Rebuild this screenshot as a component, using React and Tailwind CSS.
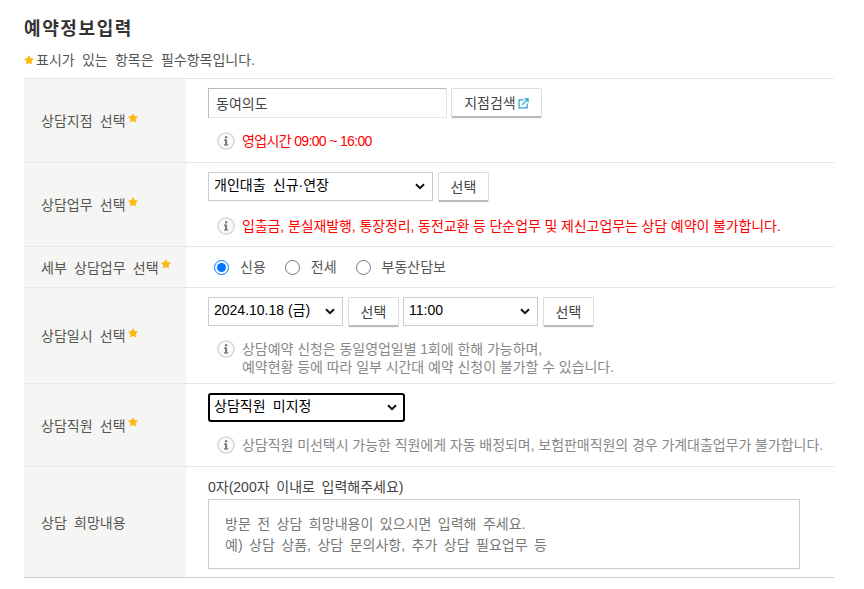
import React from 'react';

const FONT = "font-['Liberation_Sans','Noto_Sans_CJK_KR',sans-serif]";
const WORDS = '[word-spacing:3.4px]';

function Star({ className = '' }) {
  return (
    <svg viewBox="0 0 12 12" className={`w-[10px] h-[10px] ${className}`}>
      <path d="M6 0l1.9 3.7 4.1.7-2.9 3 .6 4.1L6 9.6l-3.7 1.9.6-4.1-2.9-3 4.1-.7z" fill="#fdb913" />
    </svg>
  );
}

function InfoIcon() {
  return (
    <svg viewBox="0 0 18 18" className="w-[18px] h-[18px] shrink-0">
      <circle cx="9" cy="9" r="8.1" fill="#fafafa" stroke="#d2d2d2" strokeWidth="1.3" />
      <rect x="8" y="4.2" width="2.2" height="2.2" fill="#777" />
      <path d="M7 7.6h3.1v4.6h1.1v1.3H7v-1.3h1.1V8.9H7z" fill="#777" />
    </svg>
  );
}

function Notice({ children, red = false, tracking = 'tracking-[-0.05px]' }) {
  return (
    <div className={`flex items-start gap-[7px] pl-[9px] text-[14px] leading-[18px] ${red ? 'text-[#f00]' : 'text-[#888]'} ${tracking}`}>
      <InfoIcon />
      <div>{children}</div>
    </div>
  );
}

function SelectBtn({ className = '', children = '선택' }) {
  return (
    <button
      type="button"
      className={`h-[30px] pt-[1px] bg-white border border-[#ddd] border-b-2 border-b-[#bbb] rounded-[2px] text-[14px] text-[#444] shadow-[0_1px_1px_rgba(0,0,0,0.05)] ${className}`}
    >
      {children}
    </button>
  );
}

function Field({ className = '', selectClass = 'border border-[#ccc] pl-[5px]', children }) {
  return (
    <div className={`relative h-[29px] shrink-0 ${className}`}>
      <select className={`block w-full h-full appearance-none bg-white text-[14px] text-black pb-[3px] outline-none ${selectClass}`}>
        <option>{children}</option>
      </select>
      <svg viewBox="0 0 10 7" className="absolute right-[8px] top-[11px] w-[10px] h-[7px] pointer-events-none" fill="none" stroke="#111" strokeWidth="2">
        <path d="M1 1.2l4 4 4-4" />
      </svg>
    </div>
  );
}

function Row({ label, required = true, last = false, height, children, contentClass = '' }) {
  return (
    <div className={`grid grid-cols-[162px_1fr] border-b ${last ? 'border-[#ccc]' : 'border-[#e6e6e6]'} ${height}`}>
      <div className={`bg-[#f5f5f3] flex items-center pl-[17px] pt-[2px] text-[14px] text-[#555] ${WORDS}`}>
        <span>{label}</span>
        {required && <Star className="ml-[2px] -mt-[8px]" />}
      </div>
      <div className={`pl-[22px] ${contentClass}`}>{children}</div>
    </div>
  );
}

function Radio({ label, checked = false }) {
  return (
    <label className="flex items-center gap-[11px]">
      <input type="radio" name="sub" defaultChecked={checked} className="w-[15px] h-[15px] m-0" />
      <span>{label}</span>
    </label>
  );
}

export default function App() {
  return (
    <div className={`${FONT} w-[864px] h-[589px] bg-white pl-[24px] pr-[30px] pt-[16px] overflow-hidden`}>
      <h2 className="text-[18px] leading-[27px] font-bold text-[#333] tracking-[1.6px]">예약정보입력</h2>
      <p className={`flex items-center mt-[8px] h-[19px] text-[14px] text-[#555] ${WORDS}`}>
        <Star className="mr-[2px] -mt-[2px]" />
        표시가 있는 항목은 필수항목입니다.
      </p>

      <div className="mt-[8px] border-t border-[#e6e6e6]">
        <Row label="상담지점 선택" height="h-[84px]" contentClass="pt-[9px]">
          <div className="flex gap-[4px]">
            <input
              readOnly
              value="동여의도"
              className="w-[239px] h-[30px] border border-[#e6e6e6] border-t-[#bbb] border-l-[#bbb] pl-[7px] text-[14px] text-[#444] outline-none"
            />
            <SelectBtn className="w-[91px] flex items-center justify-center gap-[2px]">
              지점검색
              <svg viewBox="0 0 12 12" className="w-[11px] h-[11px]" fill="none" stroke="#2a9fc9" strokeWidth="1.3">
                <path d="M6 2H1.2v8.8H10V6" />
                <path d="M4.5 7.5L10.6 1.4M7 1h4v4" />
              </svg>
            </SelectBtn>
          </div>
          <div className="mt-[14px]">
            <Notice red tracking="tracking-[-0.65px]">영업시간 09:00 ~ 16:00</Notice>
          </div>
        </Row>

        <Row label="상담업무 선택" height="h-[84px]" contentClass="pt-[9px]">
          <div className="flex gap-[5px]">
            <Field className="w-[225px]" selectClass={`border border-[#ccc] pl-[5px] ${WORDS}`}>개인대출 신규·연장</Field>
            <SelectBtn className="w-[51px]" />
          </div>
          <div className="mt-[15px]">
            <Notice tracking="tracking-[-0.1px]">
              <span className="text-[#f00]">입출금, 분실재발행, 통장정리, 동전교환 등 단순업무 및 제신고업무는 상담 예약이 불가합니다.</span>
            </Notice>
          </div>
        </Row>

        <Row label="세부 상담업무 선택" height="h-[41px]" contentClass="flex items-center">
          <div className={`flex items-center gap-[19px] pl-[6px] text-[14px] text-[#555] ${WORDS}`}>
            <Radio label="신용" checked />
            <Radio label="전세" />
            <Radio label="부동산담보" />
          </div>
        </Row>

        <Row label="상담일시 선택" height="h-[96px]" contentClass="pt-[9px]">
          <div className="flex">
            <Field className="w-[135px]">2024.10.18 (금)</Field>
            <SelectBtn className="w-[51px] ml-[5px]" />
            <Field className="w-[135px] ml-[4px]">11:00</Field>
            <SelectBtn className="w-[51px] ml-[5px]" />
          </div>
          <div className="mt-[13px]">
            <Notice>
              상담예약 신청은 동일영업일별 1회에 한해 가능하며,
              <br />
              예약현황 등에 따라 일부 시간대 예약 신청이 불가할 수 있습니다.
            </Notice>
          </div>
        </Row>

        <Row label="상담직원 선택" height="h-[83px]" contentClass="pt-[9px]">
          <Field className="w-[197px]" selectClass={`border-2 border-black rounded-[3px] pl-[4px] ${WORDS}`}>상담직원 미지정</Field>
          <div className="mt-[14px]">
            <Notice>상담직원 미선택시 가능한 직원에게 자동 배정되며, 보험판매직원의 경우 가계대출업무가 불가합니다.</Notice>
          </div>
        </Row>

        <Row label="상담 희망내용" required={false} last height="h-[111px]" contentClass="pt-[11px]">
          <div className="text-[14px] leading-[19px] text-[#444] [word-spacing:2.8px]">0자(200자 이내로 입력해주세요)</div>
          <textarea
            readOnly
            className="block mt-[2px] w-[592px] h-[70px] border border-[#ccc] px-[16px] py-[14px] text-[14px] leading-[21px] resize-none outline-none placeholder:text-[#777] [word-spacing:2.6px]"
            placeholder={'방문 전 상담 희망내용이 있으시면 입력해 주세요.\n예) 상담 상품, 상담 문의사항, 추가 상담 필요업무 등'}
          />
        </Row>
      </div>
    </div>
  );
}
